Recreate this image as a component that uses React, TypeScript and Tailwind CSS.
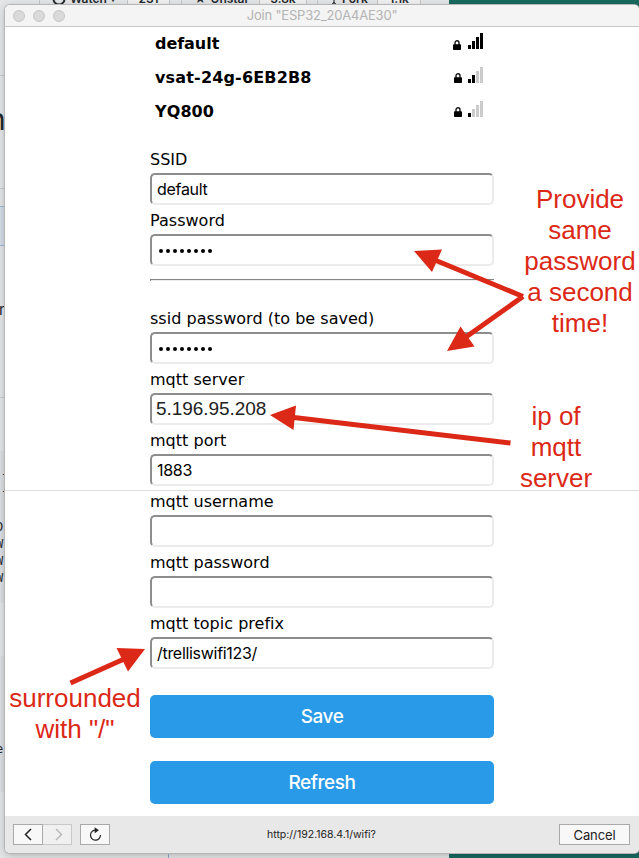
import React from "react";

const networks = [
  { name: "default", bars: 4, lock: "mr-[7px] mt-0", spacing: "tracking-[-0.05px]" },
  { name: "vsat-24g-6EB2B8", bars: 2, lock: "mr-[6px] -mt-[3px]", spacing: "tracking-[0.17px]" },
  { name: "YQ800", bars: 1, lock: "mr-[6px] -mt-[3px]", spacing: "tracking-[0.1px]" },
];

function Lock() {
  return (
    <svg width="8" height="10" viewBox="0 0 8 10" className="mt-1">
      <path d="M2 5V2.8a2 2 0 0 1 4 0V5" fill="none" stroke="#111" strokeWidth="1.4" />
      <rect x="0" y="4.2" width="8" height="5.8" rx="0.8" fill="#000" />
    </svg>
  );
}

function Signal({ bars }: { bars: number }) {
  const on = "bg-black";
  const off = "bg-[#cbcbcb]";
  return (
    <div className="flex h-4 items-end gap-px">
      <i className={`h-1 w-[3px] ${bars > 0 ? on : off}`} />
      <i className={`h-2 w-[3px] ${bars > 1 ? on : off}`} />
      <i className={`h-3 w-[3px] ${bars > 2 ? on : off}`} />
      <i className={`h-4 w-[3px] ${bars > 3 ? on : off}`} />
    </div>
  );
}

function Field({ label, value, kind = "text" }: { label: string; value: string; kind?: "text" | "dots" | "ip" }) {
  return (
    <div>
      <div className="flex h-[29px] items-center pt-[2px] font-['DejaVu_Sans',sans-serif] text-[16px] tracking-[0.02px] whitespace-nowrap">{label}</div>
      <div className="flex h-8 items-center rounded-[5px] border-2 border-t-[#8d8d8d] border-r-[#ebebeb] border-b-[#ebebeb] border-l-[#8d8d8d] bg-white pl-[5px] font-[Inter,sans-serif] text-[16px] tracking-[-0.3px]">
        {kind === "dots" ? (
          <div className="ml-[2px] flex gap-[3px] pt-[2px]">
            {Array.from(value).map((_, i) => <i key={i} className="size-1 rounded-full bg-black" />)}
          </div>
        ) : kind === "ip" ? (
          <span className="-ml-px pt-px font-['Liberation_Sans',sans-serif] text-[19px] tracking-[-0.05px] text-[#222]">{value}</span>
        ) : (
          <span>{value}</span>
        )}
      </div>
    </div>
  );
}

function Desktop() {
  return (
    <div className="absolute inset-0 overflow-hidden bg-[#e5e6e7] text-[#24292e]">
      <div className="absolute top-0 left-[449px] h-[858px] w-[190px] bg-[#17695f]" />
      <div className="absolute top-[75px] left-0 h-px w-[5px] bg-[#c9cdd1]" />
      <div className="absolute top-[188px] left-0 h-px w-[5px] bg-[#c9cdd1]" />
      <div className="absolute top-[206px] left-0 h-10 w-[5px] border-y border-[#9bb9d5] bg-[#d5dde8]" />
      <div className="absolute top-[397px] left-0 h-px w-[5px] bg-[#cccccc]" />
      <div className="absolute top-[451px] left-0 h-[152px] w-[5px] bg-[#dcdfe3]" />
      <div className="absolute top-[656px] left-0 h-[136px] w-[5px] bg-[#dcdfe3]" />
      <div className="absolute top-[-11px] left-[39px] flex h-[20px] items-start font-[Inter,sans-serif] text-[12px] leading-4 font-semibold">
        <div className="flex h-5 w-[89px] items-center border-x border-[#c5c7c9] pl-3">
          <svg width="14" height="14" viewBox="0 0 14 14" className="mr-1"><circle cx="7" cy="7" r="5.5" fill="none" stroke="#24292e" strokeWidth="2" /></svg>
          Watch <span className="ml-1 text-[8px]">▾</span>
        </div>
        <div className="flex h-5 w-[42px] items-center justify-center border-r border-[#c5c7c9] bg-[#f1f1f1]">231</div>
        <div className="ml-[11px] flex h-5 w-[79px] items-center border-x border-[#c5c7c9] pl-3">★ <span className="ml-1">Unstar</span></div>
        <div className="flex h-5 w-[47px] items-center justify-center border-r border-[#c5c7c9] bg-[#f1f1f1]">3.8k</div>
        <div className="ml-[10px] flex h-5 w-[61px] items-center border-x border-[#c5c7c9] pl-3">
          <svg width="8" height="14" viewBox="0 0 8 14" className="mr-1"><path d="M1 2v4l3 2 3-2V2M4 8v4" fill="none" stroke="#24292e" /><circle cx="4" cy="12" r="1.4" fill="none" stroke="#24292e" /></svg>
          Fork
        </div>
        <div className="flex h-5 w-[43px] items-center justify-center border-r border-[#c5c7c9] bg-[#f1f1f1]">1.1k</div>
      </div>
      <div className="absolute top-[101px] left-[-12px] font-[Inter,sans-serif] text-[30px] leading-[36px]">n</div>
      <div className="absolute top-[301px] left-[-1px] font-[Inter,sans-serif] text-[15px] leading-[18px]">r</div>
      <div className="absolute top-[466px] left-[1px] font-['DejaVu_Sans_Mono',monospace] text-[12px] leading-[17px]">-<br />-</div>
      <div className="absolute top-[519px] left-[-4px] font-['DejaVu_Sans_Mono',monospace] text-[12px] leading-[17px] whitespace-pre">{"D,\nWI\nWI\nWI"}</div>
      <div className="absolute top-[741px] left-[-4px] font-['DejaVu_Sans_Mono',monospace] text-[12px] leading-[17px]">e'</div>
      <div className="absolute top-[853px] left-[168px] h-[5px] w-px bg-[#91abc7]" />
    </div>
  );
}

function Arrows() {
  return (
    <svg width="639" height="858" viewBox="0 0 639 858" className="pointer-events-none absolute top-0 left-0">
      <g stroke="#dc2816" strokeWidth="5" fill="none">
        <path d="M523 296.5L436 260.5" />
        <path d="M523 296.5L466 337" />
        <path d="M510.5 443L294 417.5" />
        <path d="M70.5 683L123 659.5" />
      </g>
      <g fill="#dc2816">
        <path d="M414 251L442 249.5L432 272Z" />
        <path d="M447 351L460.5 326.5L474.5 346.5Z" />
        <path d="M270 415L296 405.5L293.5 430Z" />
        <path d="M145 649L116.5 648L128 671.5Z" />
      </g>
    </svg>
  );
}

const note = "absolute text-center font-['Liberation_Sans',sans-serif] text-[26px] leading-[31px] text-[#dc2816] whitespace-nowrap";
const toolButton = "flex h-[21px] items-center justify-center border border-[#a9a9a9] bg-[#f8f8f8]";

export default function App() {
  return (
    <div className="relative h-[858px] w-[639px] overflow-hidden text-black">
      <Desktop />
      <main className="absolute top-[5px] left-[5px] flex h-[848px] w-[634px] flex-col overflow-hidden rounded-[5px] bg-white shadow-[0_0_0_1px_#b6b6b6,0_2px_8px_rgba(0,0,0,0.25)]">
        <header className="flex h-[22px] shrink-0 items-center border-b border-[#c8c8c8] bg-[#f4f4f4] pl-2">
          <div className="flex w-[52px] gap-2">
            <i className="size-3 rounded-full border border-[#c6c6c6] bg-[#d9d9d9]" />
            <i className="size-3 rounded-full border border-[#c6c6c6] bg-[#d9d9d9]" />
            <i className="size-3 rounded-full border border-[#c6c6c6] bg-[#d9d9d9]" />
          </div>
          <div className="flex-1 pt-px pr-[60px] text-center font-[Inter,sans-serif] text-[13px] tracking-[-0.2px] text-[#b3b3b3]">Join "ESP32_20A4AE30"</div>
        </header>
        <section className="h-[789px] shrink-0 pl-[145px]">
          <div className="w-[344px]">
            <div className="-mt-px">
              {networks.map((n) => (
                <div key={n.name} className="flex h-[34px] items-center pr-[11px] pl-[5px]">
                  <span className={`flex-1 pt-[2px] font-['DejaVu_Sans',sans-serif] text-[16px] font-bold ${n.spacing}`}>{n.name}</span>
                  <span className={n.lock}><Lock /></span>
                  <div className="-mt-1"><Signal bars={n.bars} /></div>
                </div>
              ))}
            </div>
            <div className="pt-4">
              <Field label="SSID" value="default" />
              <Field label="Password" value="password" kind="dots" />
            </div>
            <hr className="mt-[13px] mb-[22px] h-[2px] border-0 border-t border-l border-[#858585] bg-[#ededed]" />
            <Field label="ssid password (to be saved)" value="password" kind="dots" />
            <Field label="mqtt server" value="5.196.95.208" kind="ip" />
            <Field label="mqtt port" value="1883" />
            <Field label="mqtt username" value="" />
            <Field label="mqtt password" value="" />
            <Field label="mqtt topic prefix" value="/trelliswifi123/" />
            <div className="flex flex-col gap-[23px] pt-[26px] font-[Inter,sans-serif] text-[19px] font-medium tracking-[-0.45px] text-white">
              <button className="h-[43px] rounded-[5px] bg-[#299ae7] pt-[2px]">Save</button>
              <button className="h-[43px] rounded-[5px] bg-[#299ae7] pt-[2px]">Refresh</button>
            </div>
          </div>
        </section>
        <footer className="flex h-[37px] shrink-0 items-center bg-[#e8e8e8] pr-[9px] pl-2 font-[Inter,sans-serif]">
          <button className={`${toolButton} w-[30px]`}>
            <svg width="8" height="13" viewBox="0 0 8 13"><path d="M7 1L1.5 6.5L7 12" fill="none" stroke="#222" strokeWidth="1.5" /></svg>
          </button>
          <button className="flex h-[21px] w-[29px] items-center justify-center border border-l-0 border-[#c8c8c8] bg-[#f0f0f0]">
            <svg width="8" height="13" viewBox="0 0 8 13" className="ml-[3px]"><path d="M1 1L6.5 6.5L1 12" fill="none" stroke="#b5b5b5" strokeWidth="1.4" /></svg>
          </button>
          <button className={`${toolButton} ml-2 w-[30px]`}>
            <svg width="13" height="15" viewBox="0 0 13 15"><path d="M7.5 3.2A5 5 0 1 0 11.5 8" fill="none" stroke="#222" strokeWidth="1.2" /><path d="M5.7 0.3L9.9 3.3L5.7 6.2Z" fill="#222" /></svg>
          </button>
          <div className="ml-[157px] flex-1 text-[10.5px] tracking-[0.01px] text-[#222]">http://192.168.4.1/wifi?</div>
          <button className={`${toolButton} w-[71px] pt-[2px] text-[13px] tracking-[-0.1px] text-[#222]`}>Cancel</button>
        </footer>
      </main>
      <div className="absolute top-[490px] left-[5px] h-px w-[634px] bg-[#dedede]" />
      <Arrows />
      <div className={`${note} top-[184px] left-[520px] w-[120px]`}>Provide<br />same<br />password<br />a second<br />time!</div>
      <div className={`${note} top-[401px] left-[506px] w-[100px]`}>ip of<br />mqtt<br />server</div>
      <div className={`${note} top-[683px] left-[5px] w-[140px]`}>surrounded<br />with "/"</div>
    </div>
  );
}
